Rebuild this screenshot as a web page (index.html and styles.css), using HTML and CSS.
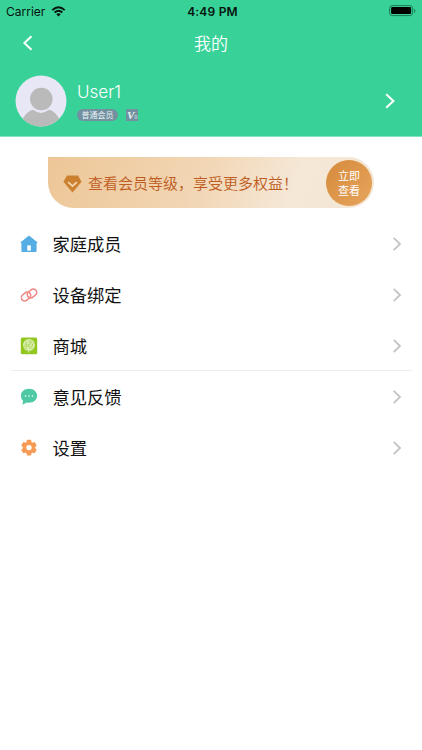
FILE: index.html
```html
<!DOCTYPE html>
<html lang="zh-CN">
<head>
<meta charset="utf-8">
<title>我的</title>
<link rel="stylesheet" href="styles.css">
</head>
<body>
<header class="header">
  <div class="status">
    <div class="carrier"><span>Carrier</span>
      <svg width="15" height="11" viewBox="0 0 16 12"><g fill="none" stroke="#07140e" stroke-width="2"><path d="M1.2 4.5Q8-1.7 14.8 4.5"/><path d="M3.8 7.1Q8 3.2 12.2 7.1"/></g><path d="M5.6 9Q8 6.8 10.4 9L8 11.4Z" fill="#07140e"/></svg>
    </div>
    <time class="time">4:49 PM</time>
    <svg class="battery" width="28" height="12" viewBox="0 0 28 12"><rect x="1.6" y=".6" width="23" height="10" rx="2.8" fill="none" stroke="#1b7953" stroke-width="1"/><rect x="3.1" y="2.1" width="20" height="7" rx="1.3" fill="#000"/><path d="M26 4v4q1.5-.5 1.5-2T26 4" fill="#1b8c5e"/></svg>
  </div>
  <nav class="nav">
    <svg class="back" width="12" height="18" viewBox="0 0 12 18"><path d="M9.5 2.2L2.4 9l7.1 6.8" fill="none" stroke="#fff" stroke-width="2"/></svg>
    <h1 class="title">我的</h1>
  </nav>
  <section class="profile">
    <svg class="avatar" width="52" height="52" viewBox="0 0 52 52"><clipPath id="face"><circle cx="26" cy="26" r="25.5"/></clipPath><g clip-path="url(#face)"><path fill="#e8e7f5" d="M0 0h52v52H0z"/><path d="M7 52V45Q12 36 18 34.8Q26 41 34 34.8Q40 36 45 45V52Z" fill="#bababa"/><circle cx="26" cy="24" r="12.2" fill="#e8e7f5"/><circle cx="26.3" cy="24" r="11.3" fill="#bababa"/></g></svg>
    <div class="user">
      <div class="name">User1</div>
      <div class="badges"><span class="member">普通会员</span><span class="level"><span class="v">V</span><small>0</small></span></div>
    </div>
    <svg class="go" width="12" height="18" viewBox="0 0 12 18"><path d="M2.2 2.2L9.4 9l-7.2 6.8" fill="none" stroke="#fff" stroke-width="2"/></svg>
  </section>
</header>
<main>
  <section class="banner">
    <svg class="gem" width="19" height="18" viewBox="0 0 19 18"><path d="M4 .5h11L18.6 6.8 9.5 17.5.4 6.8Z" fill="#cc8131"/><path d="M5.2 7.2l4.3 4 4.3-4" fill="none" stroke="#f6d9b3" stroke-width="1.7"/></svg>
    <span class="promo">查看会员等级，享受更多权益！</span>
    <button class="view">立即<br>查看</button>
  </section>
  <ul class="menu">
    <li class="row">
      <svg class="icon" viewBox="0 0 18 18"><path d="M9 .4L17.4 7.3V8H.6V7.3Z" fill="#55aee3"/><path d="M1.4 7.2h15.2V16q0 .9-.9.9H2.3q-.9 0-.9-.9Z" fill="#55aee3"/><rect x="7.3" y="10.3" width="3.5" height="5.4" rx=".8" fill="#fff"/></svg>
      <span class="label">家庭成员</span><svg class="arrow" viewBox="0 0 10 16"><path d="M1.7 1.8L8 8l-6.3 6.2"/></svg></li>
    <li class="row">
      <svg class="icon" viewBox="0 0 18 18"><g fill="none" stroke="#f08886" stroke-width="1.6" stroke-linecap="round"><rect x=".9" y="7.1" width="10.2" height="6.8" rx="3.4" transform="rotate(-40 6 10.5)" stroke-dasharray="22.5 1.6 20" stroke-dashoffset="-1"/><rect x="6.9" y="4.1" width="10.2" height="6.8" rx="3.4" transform="rotate(-40 12 7.5)"/></g></svg>
      <span class="label">设备绑定</span><svg class="arrow" viewBox="0 0 10 16"><path d="M1.7 1.8L8 8l-6.3 6.2"/></svg></li>
    <li class="row">
      <svg class="icon" viewBox="0 0 18 18"><rect x=".8" y=".5" width="16.4" height="16.8" rx="1.6" fill="#92c720"/><circle cx="9" cy="8" r="6" fill="#d6edaa"/><g fill="none" stroke="#92c720" stroke-width=".55"><path d="M8.8 15V7M8.8 10L5 7M9 8l3-4M9 11l4-3M6.5 8L6 4.5M10.5 6L9 3M4 9l3 1M14 6l-2 2M7 12l-2-1M11 11l2 1"/></g><path d="M8.7 10v5.7" stroke="#e8f4ce" stroke-width=".8"/></svg>
      <span class="label">商城</span><svg class="arrow" viewBox="0 0 10 16"><path d="M1.7 1.8L8 8l-6.3 6.2"/></svg></li>
    <li class="row divided">
      <svg class="icon" viewBox="0 0 18 18"><path d="M9 .8C4.5.8.9 3.6.9 7.7q0 3 2.2 5-.2 2-.8 3.8 2.4-.3 4.2-2 1.2.3 2.5.3c4.5 0 8.1-2.8 8.1-7S13.5.8 9 .8" fill="#4fc8a5"/><g fill="#effff9"><circle cx="5.5" cy="8" r=".8"/><circle cx="9" cy="8" r=".8"/><circle cx="12.5" cy="8" r=".8"/></g></svg>
      <span class="label">意见反馈</span><svg class="arrow" viewBox="0 0 10 16"><path d="M1.7 1.8L8 8l-6.3 6.2"/></svg></li>
    <li class="row">
      <svg class="icon" viewBox="0 0 18 18"><g fill="#f69b56"><circle cx="9" cy="8.6" r="6.2"/><rect x="6.6" y=".8" width="4.8" height="15.6" rx="1.2"/><rect x="6.6" y=".8" width="4.8" height="15.6" rx="1.2" transform="rotate(60 9 8.6)"/><rect x="6.6" y=".8" width="4.8" height="15.6" rx="1.2" transform="rotate(120 9 8.6)"/></g><circle cx="9" cy="8.6" r="2.7" fill="#fff"/></svg>
      <span class="label">设置</span><svg class="arrow" viewBox="0 0 10 16"><path d="M1.7 1.8L8 8l-6.3 6.2"/></svg></li>
  </ul>
</main>
</body>
</html>
```
FILE: styles.css
```css
* { box-sizing: border-box; }
body { margin: 0; background: #fff; font-family: Inter, "Noto Sans CJK SC", sans-serif; color: #111; }
svg { display: block; flex: none; }
.header { height: 137px; background: #38d298; border-bottom: 1px solid #84e2bf; }
.status { height: 22px; display: grid; grid-template-columns: 1fr auto 1fr; align-items: center; padding: 0 6px 0 6px; color: #07140e; }
.carrier { display: flex; align-items: center; gap: 6px; font-size: 12px; letter-spacing: 0; }
.time { font-size: 12px; font-weight: 600; letter-spacing: .2px; padding-left: 3px; }
.battery { justify-self: end; }
.nav { height: 42px; display: grid; grid-template-columns: 1fr auto 1fr; align-items: center; padding: 0 22px; }
.title { margin: 1px 0 0; color: #fff; font-size: 17px; line-height: 24px; font-weight: 350; }
.profile { display: flex; align-items: center; height: 73px; padding: 0 26px 0 15px; }
.user { margin-left: 10px; flex: 1; color: #fff; }
.name { font-size: 17px; line-height: 22px; font-weight: 350; }
.badges { display: flex; gap: 8px; margin-top: 6px; }
.member { width: 41px; height: 12px; border-radius: 6px; background: #7290a0; color: #eaf2f5; font-size: 8px; line-height: 12px; text-align: center; }
.level { width: 12px; height: 12px; padding-left: 1px; background: #7290a0; color: #e4f5f2; display: flex; }
.v { font: italic bold 11px/12px "Liberation Serif", serif; }
.level small { font: 5px/17px Inter, sans-serif; }
.banner { display: flex; align-items: center; width: 326px; height: 51px; margin: 20px 0 0 48px; padding: 0 2px 0 15px; border-radius: 0 26px 26px 26px; background: linear-gradient(110deg, #edc697, #f2d7b6 48%, #f5e8d7 75%, #f3e5d3); }
.gem { margin-top: 3px; }
.promo { margin: 2px 0 0 6px; color: #bd5b20; font-size: 15px; line-height: 22px; font-weight: 350; white-space: nowrap; }
.view { margin: 0 0 0 auto; width: 46px; height: 46px; padding: 0; border: 0; border-radius: 50%; background: linear-gradient(130deg, #d58a3b, #e7a55d); color: #fff; font: 400 11px/15px "Noto Sans CJK SC", sans-serif; flex: none; }
.menu { list-style: none; margin: 10px 10px 0 11px; padding: 0; }
.row { height: 51px; display: flex; align-items: center; padding: 0 10px 0 9px; }
.divided { box-shadow: 0 -1px #ebebf2; }
.icon { width: 18px; height: 18px; }
.label { flex: 1; margin: 1px 0 0 14.5px; font-size: 17.3px; line-height: 25px; }
.arrow { width: 10px; height: 16px; fill: none; stroke: #c4c4c6; stroke-width: 1.8; }
```
